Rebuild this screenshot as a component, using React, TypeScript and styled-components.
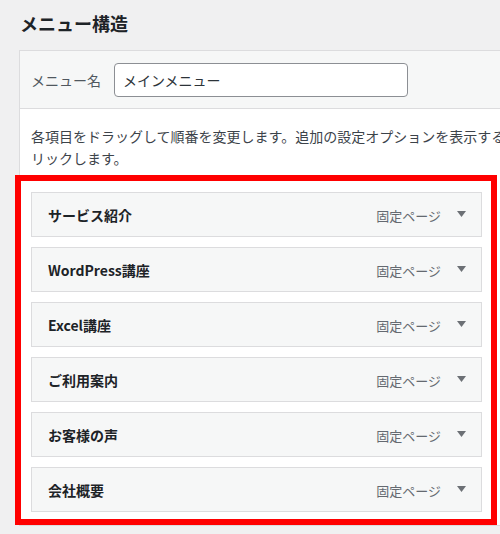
import React from "react";
import styled, { createGlobalStyle } from "styled-components";

const GlobalStyle = createGlobalStyle`
  html, body {
    margin: 0;
    padding: 0;
    overflow: hidden;
    background: #f0f0f1;
    font-family: "Noto Sans CJK JP", "Noto Sans", sans-serif;
    color: #1d2327;
  }
`;

const Page = styled.div`
  padding: 11px 0 0 19px;
  width: 500px;
  height: 534px;
  box-sizing: border-box;
`;

const Title = styled.h2`
  margin: 0 0 14px 1px;
  font-size: 18px;
  line-height: 25px;
  font-weight: 700;
  color: #1d2327;
  white-space: nowrap;
`;

const Panel = styled.div`
  width: 700px;
  border: 1px solid #dcdcde;
  background: #fff;
`;

const Header = styled.div`
  display: flex;
  align-items: center;
  gap: 13px;
  padding: 12px 11px 11px;
  background: #f6f7f7;
  border-bottom: 1px solid #dcdcde;
`;

const Label = styled.label`
  font-size: 14px;
  color: #50575e;
  white-space: nowrap;
`;

const NameInput = styled.input`
  box-sizing: border-box;
  width: 294px;
  height: 34px;
  padding: 0 8px;
  border: 1px solid #8c8f94;
  border-radius: 4px;
  background: #fff;
  font-family: inherit;
  font-size: 14px;
  color: #2c3338;
  outline: none;
`;

const Body = styled.div`
  padding: 16px 0 0 11px;
`;

const Description = styled.p`
  margin: 0;
  font-size: 14px;
  line-height: 22px;
  color: #3c434a;
  white-space: nowrap;
`;

const ItemList = styled.ul`
  list-style: none;
  box-sizing: border-box;
  width: 482px;
  margin: 6px 0 0 -16px;
  padding: 11px 9px 7px 10px;
  border: 6px solid #ff0000;
  display: flex;
  flex-direction: column;
  gap: 10px;
`;

const Item = styled.li`
  box-sizing: border-box;
  height: 45px;
  display: flex;
  align-items: center;
  padding: 0 15px 0 16px;
  background: #f6f7f7;
  border: 1px solid #dcdcde;
`;

const ItemTitle = styled.span`
  flex: 1;
  font-size: 14px;
  font-weight: 700;
  color: #1d2327;
  padding-top: 1px;
`;

const ItemType = styled.span`
  font-size: 13px;
  color: #646970;
  padding-top: 2px;
  margin-right: 16px;
`;

const Arrow = styled.svg`
  width: 9px;
  height: 6px;
  margin-top: -2px;
  display: block;
`;

const items = [
  "サービス紹介",
  "WordPress講座",
  "Excel講座",
  "ご利用案内",
  "お客様の声",
  "会社概要",
];

export default function App() {
  return (
    <>
      <GlobalStyle />
      <Page>
        <Title>メニュー構造</Title>
        <Panel>
          <Header>
            <Label>メニュー名</Label>
            <NameInput defaultValue="メインメニュー" />
          </Header>
          <Body>
            <Description>
              各項目をドラッグして順番を変更します。追加の設定オプションを表示するには、項目右側の矢印をク
              <br />
              リックします。
            </Description>
            <ItemList>
              {items.map((t) => (
                <Item key={t}>
                  <ItemTitle>{t}</ItemTitle>
                  <ItemType>固定ページ</ItemType>
                  <Arrow viewBox="0 0 9 6">
                    <polygon points="0,0 9,0 4.5,6" fill="#6c7075" />
                  </Arrow>
                </Item>
              ))}
            </ItemList>
          </Body>
        </Panel>
      </Page>
    </>
  );
}
